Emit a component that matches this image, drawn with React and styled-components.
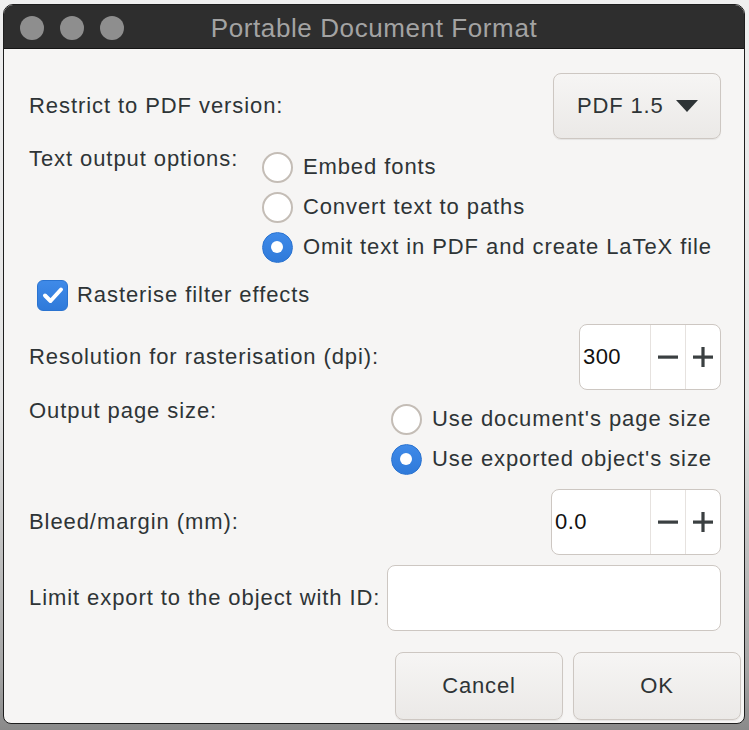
import React from "react";
import styled, { createGlobalStyle } from "styled-components";

const GlobalStyle = createGlobalStyle`
  html, body {
    margin: 0;
    padding: 0;
  }
  body {
    font-family: "Liberation Sans", Arial, sans-serif;
    background: #ececec;
  }
`;

const Screen = styled.div`
  width: 749px;
  height: 730px;
  box-sizing: border-box;
  padding: 4px 4px 0 3px;
  background: linear-gradient(#efefef 0%, #e2e2e2 55%, #a4a4a4 92%, #8a8a8a 100%);
  overflow: hidden;
`;

const Window = styled.div`
  width: 742px;
  height: 720px;
  box-sizing: border-box;
  border: 1px solid #1e1e1e;
  border-radius: 10px 10px 8px 8px;
  background: #f6f5f4;
  overflow: hidden;
  display: flex;
  flex-direction: column;
`;

const TitleBar = styled.div`
  height: 44px;
  flex: none;
  background: #2e2e2e;
  border-bottom: 1px solid #151515;
  display: grid;
  grid-template-columns: 1fr auto 1fr;
  align-items: center;
  padding: 3px 0 0 16px;
  box-sizing: border-box;
`;

const Lights = styled.div`
  display: flex;
  gap: 16px;
`;

const Light = styled.span`
  width: 24px;
  height: 24px;
  border-radius: 50%;
  background: #8e8e8e;
`;

const Title = styled.div`
  font-size: 26px;
  letter-spacing: 0.6px;
  color: #a3a3a3;
  margin-left: -16px;
`;

const Content = styled.div`
  flex: 1;
  display: flex;
  flex-direction: column;
  padding: 24px 23px 0 25px;
  color: #2e3436;
  font-size: 22px;
  letter-spacing: 0.92px;
`;

const Row = styled.div`
  display: flex;
  justify-content: space-between;
  align-items: ${(p) => (p.$top ? "flex-start" : "center")};
  margin-top: ${(p) => p.$mt || 0}px;
  min-height: ${(p) => p.$h || 0}px;
`;

const Label = styled.span`
  line-height: 24px;
  white-space: nowrap;
`;

const Dropdown = styled.button`
  width: 168px;
  height: 66px;
  box-sizing: border-box;
  display: flex;
  align-items: center;
  gap: 12px;
  padding: 0 0 0 23px;
  border: 1px solid #cdc7c2;
  border-radius: 8px;
  background: linear-gradient(#f6f5f4, #ebe9e7);
  box-shadow: 0 1px 1px rgba(0, 0, 0, 0.07);
  font: inherit;
  color: #2e3436;
  letter-spacing: 0.85px;
`;

const RadioGroup = styled.div`
  display: flex;
  flex-direction: column;
  margin-right: 9px;
`;

const RadioItem = styled.label`
  display: flex;
  align-items: center;
  gap: 10px;
  height: 40px;
  white-space: nowrap;
`;

const RadioCircle = styled.span`
  width: 31px;
  height: 31px;
  box-sizing: border-box;
  border-radius: 50%;
  flex: none;
  display: flex;
  align-items: center;
  justify-content: center;
  border: ${(p) => (p.$checked ? "1px solid #2a73d0" : "2px solid #c4bdb6")};
  background: ${(p) =>
    p.$checked ? "linear-gradient(#3f8ae8, #2f7ada)" : "#ffffff"};
  &::after {
    content: "";
    display: ${(p) => (p.$checked ? "block" : "none")};
    width: 12px;
    height: 12px;
    border-radius: 50%;
    background: #fff;
  }
`;

const CheckRow = styled.label`
  display: flex;
  align-items: center;
  gap: 9px;
  padding-left: 8px;
  height: 32px;
  margin-top: 12px;
`;

const CheckBox = styled.span`
  width: 31px;
  height: 31px;
  border-radius: 6px;
  background: linear-gradient(#3f8ae8, #2f7ada);
  border: 1px solid #2a73d0;
  box-sizing: border-box;
  display: flex;
  align-items: center;
  justify-content: center;
`;

const Spin = styled.div`
  display: flex;
  height: 66px;
  box-sizing: border-box;
  border: 1px solid #cdc7c2;
  border-radius: 8px;
  background: #fff;
  overflow: hidden;
`;

const SpinValue = styled.div`
  width: ${(p) => p.$w}px;
  display: flex;
  align-items: center;
  padding-left: 3px;
  box-sizing: border-box;
  color: #111;
  letter-spacing: 0.4px;
`;

const SpinButton = styled.div`
  width: 34px;
  border-left: 1px solid #e6e2df;
  display: flex;
  align-items: center;
  justify-content: center;
`;

const Entry = styled.div`
  width: 334px;
  height: 66px;
  box-sizing: border-box;
  border: 1px solid #cdc7c2;
  border-radius: 8px;
  background: #fff;
`;

const ButtonBar = styled.div`
  display: flex;
  justify-content: flex-end;
  gap: 10px;
  margin-top: 21px;
  margin-right: -20px;
`;

const Button = styled.button`
  width: 168px;
  height: 68px;
  box-sizing: border-box;
  border: 1px solid #cdc7c2;
  border-radius: 8px;
  background: linear-gradient(#f6f5f4, #ebe9e7);
  box-shadow: 0 1px 1px rgba(0, 0, 0, 0.07);
  font: inherit;
  color: #2e3436;
  letter-spacing: 0.85px;
`;

const Minus = () => (
  <svg width="20" height="20" viewBox="0 0 20 20">
    <rect x="0" y="8.5" width="20" height="3.2" fill="#3a3f41" />
  </svg>
);

const Plus = () => (
  <svg width="20" height="20" viewBox="0 0 20 20">
    <rect x="0" y="8.5" width="20" height="3.2" fill="#3a3f41" />
    <rect x="8.4" y="0" width="3.2" height="20" fill="#3a3f41" />
  </svg>
);

function Radio({ checked, children }) {
  return (
    <RadioItem>
      <RadioCircle $checked={checked} />
      {children}
    </RadioItem>
  );
}

function SpinBox({ value, width }) {
  return (
    <Spin>
      <SpinValue $w={width}>{value}</SpinValue>
      <SpinButton>
        <Minus />
      </SpinButton>
      <SpinButton>
        <Plus />
      </SpinButton>
    </Spin>
  );
}

export default function App() {
  return (
    <Screen>
      <GlobalStyle />
      <Window>
        <TitleBar>
          <Lights>
            <Light />
            <Light />
            <Light />
          </Lights>
          <Title>Portable Document Format</Title>
          <span />
        </TitleBar>
        <Content>
          <Row $h={66}>
            <Label>Restrict to PDF version:</Label>
            <Dropdown>
              PDF 1.5
              <svg width="22" height="12" viewBox="0 0 22 12">
                <path d="M0 0 H22 L11 12 Z" fill="#2e3436" />
              </svg>
            </Dropdown>
          </Row>

          <Row $top $mt={8}>
            <Label>Text output options:</Label>
            <RadioGroup>
              <Radio>Embed fonts</Radio>
              <Radio>Convert text to paths</Radio>
              <Radio checked>Omit text in PDF and create LaTeX file</Radio>
            </RadioGroup>
          </Row>

          <CheckRow>
            <CheckBox>
              <svg width="22" height="18" viewBox="0 0 22 18">
                <path
                  d="M3 9.5 L8.5 15 L19 3.5"
                  fill="none"
                  stroke="#fff"
                  strokeWidth="4"
                  strokeLinecap="round"
                  strokeLinejoin="round"
                />
              </svg>
            </CheckBox>
            Rasterise filter effects
          </CheckRow>

          <Row $mt={13}>
            <Label>Resolution for rasterisation (dpi):</Label>
            <SpinBox value="300" width={70} />
          </Row>

          <Row $top $mt={9}>
            <Label>Output page size:</Label>
            <RadioGroup>
              <Radio>Use document's page size</Radio>
              <Radio checked>Use exported object's size</Radio>
            </RadioGroup>
          </Row>

          <Row $mt={10}>
            <Label>Bleed/margin (mm):</Label>
            <SpinBox value="0.0" width={98} />
          </Row>

          <Row $mt={10}>
            <Label>Limit export to the object with ID:</Label>
            <Entry />
          </Row>

          <ButtonBar>
            <Button>Cancel</Button>
            <Button>OK</Button>
          </ButtonBar>
        </Content>
      </Window>
    </Screen>
  );
}
